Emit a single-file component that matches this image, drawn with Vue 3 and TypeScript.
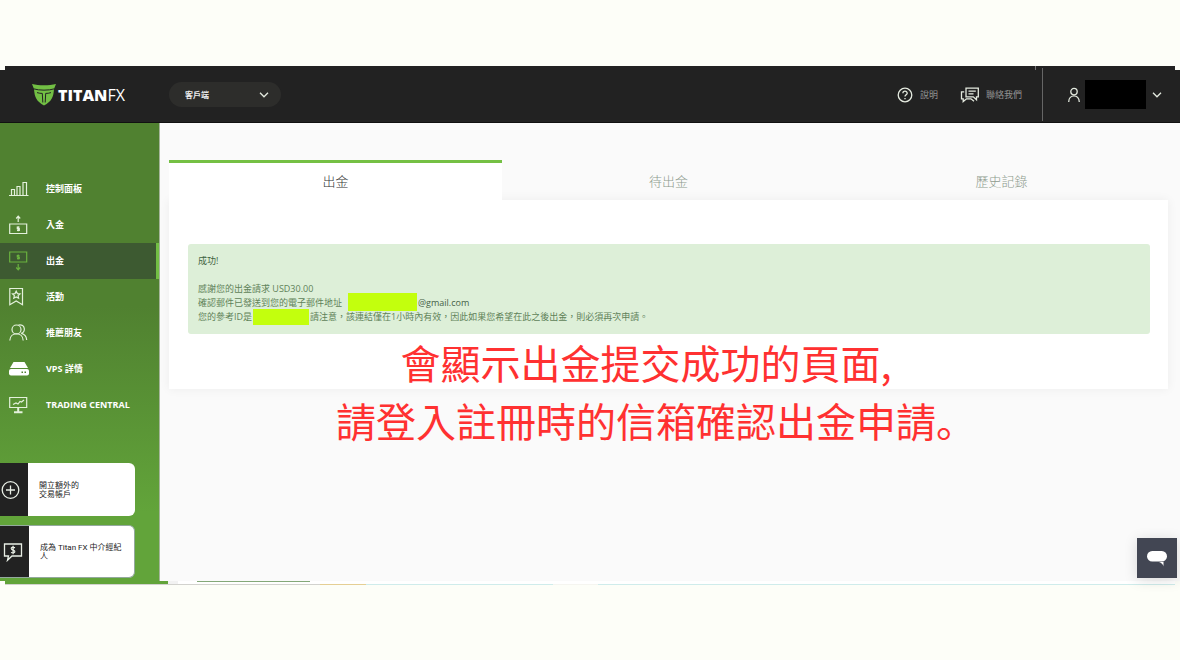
<script setup lang="ts">
import { ref } from 'vue'

interface NavItem {
  id: string
  label: string
}

const navItems: NavItem[] = [
  { id: 'dashboard', label: '控制面板' },
  { id: 'deposit', label: '入金' },
  { id: 'withdraw', label: '出金' },
  { id: 'promo', label: '活動' },
  { id: 'refer', label: '推薦朋友' },
  { id: 'vps', label: 'VPS 詳情' },
  { id: 'trading', label: 'TRADING CENTRAL' },
]
const activeNav = ref('withdraw')

const tabs = ['出金', '待出金', '歷史記錄']
const activeTab = ref(0)
const area = ref('client')
</script>

<template>
  <div class="stage" lang="zh-Hant">
    <div class="edge-top"><i></i></div>

    <header class="topbar">
      <a class="logo" href="#" aria-label="TITANFX">
        <svg width="24" height="22" viewBox="0 0 24 22">
          <path d="M0 0C7 1.800 17 1.800 24 0L22 5C21.500 13 19.500 17.500 12 21.500C4.500 17.500 2.500 13 2 5Z" fill="#72bf44" />
          <path d="M1.500 4.800C7 6.600 17 6.600 22.500 4.800M5 8.600Q8 9.500 10.300 9.400L10.800 18.500M19 8.600Q16 9.500 13.700 9.400L13.200 18.500" fill="none" stroke="#222" />
        </svg>
        <span class="brand"><b>TITAN</b><span>FX</span></span>
      </a>

      <div class="picker">
        <select v-model="area" aria-label="客戶端">
          <option value="client">客戶端</option>
        </select>
        <svg class="picker-arrow line" width="10" height="6" viewBox="0 0 10 6"><path d="M1 .8L5 4.800L9 .8" /></svg>
      </div>

      <nav class="tools">
        <a href="#">
          <svg class="line" width="16" height="16" viewBox="0 0 16 16">
            <circle cx="8" cy="8" r="6.800" />
            <path d="M5.900 6.300C5.900 3.500 10.200 3.500 10.200 6.200C10.200 7.800 8 7.800 8 9.600M8 11V12.200" />
          </svg>
          <span>說明</span>
        </a>
        <a href="#">
          <svg class="line" width="20" height="16" viewBox="0 0 20 16">
            <path d="M6 1.200H18.300V9.800H16.500V12.800L13.300 9.800H6ZM8.500 4.200H15.800M8.500 6.800H13.500" />
            <path d="M4.200 4.800H1.500V11.800H3.200V14.600L6.500 11.800H11L14 14.200" />
          </svg>
          <span>聯絡我們</span>
        </a>
      </nav>

      <button class="account" type="button" aria-label="帳戶">
        <svg class="line" width="14" height="16" viewBox="0 0 14 16">
          <circle cx="7" cy="4.600" r="3.200" />
          <path d="M1.700 15C1.700 6.800 12.300 6.800 12.300 15" />
        </svg>
        <span class="masked"></span>
        <svg class="line" width="10" height="6" viewBox="0 0 10 6"><path d="M1 .8L5 4.800L9 .8" /></svg>
      </button>
    </header>

    <div class="workspace">
      <aside class="sidebar">
        <nav>
          <a
            v-for="item in navItems"
            :key="item.id"
            href="#"
            :class="{ active: item.id === activeNav }"
            @click.prevent="activeNav = item.id"
          >
            <svg width="20" height="20" viewBox="0 0 20 20">
              <g v-if="item.id === 'dashboard'">
                <path d="M0 16.500H19.500M2.500 16V10.500H5.500V16M8 16V7.500H11V16M14 16V3.500H17.500V16" />
              </g>
              <g v-else-if="item.id === 'deposit'">
                <path d="M.7 9H17.700V18.500H.7ZM9.200 7V1.500M7.200 3.500L9.200 1.200L11.200 3.500" />
                <path d="M10.500 12.200H8.300V13.700H10.300V15.300H8M9.200 11.300V16.200" />
              </g>
              <g v-else-if="item.id === 'withdraw'">
                <path d="M.7 1H17.700V11H.7ZM9.200 13V18.500M7.200 16.500L9.200 18.800L11.200 16.500" />
                <path d="M10.500 4.500H8.300V6H10.300V7.600H8M9.200 3.600V8.500" />
              </g>
              <g v-else-if="item.id === 'promo'">
                <path d="M.8 1.500H13.500V17.800L7.200 14L.8 17.800Z" />
                <path d="M7.200 4.200L8.400 6.600L11 6.900L9.100 8.600L9.600 11.200L7.200 9.900L4.800 11.200L5.400 8.600L3.500 6.900L6 6.600Z" />
              </g>
              <g v-else-if="item.id === 'refer'">
                <circle cx="7.500" cy="6.500" r="4.500" />
                <path d="M.8 17.500C1.200 8.500 13.800 8.500 14.200 17.500M9.500 2C16.500 .5 17 9.500 12.200 10.300C15.500 11 17.500 13.500 17.700 17" />
              </g>
              <g v-else-if="item.id === 'vps'" class="solid">
                <path d="M4.500 3H15.500L19 9H1Z" />
                <path d="M2 10H18Q20 10 20 12V14.500Q20 16.500 18 16.500H2Q0 16.500 0 14.500V12Q0 10 2 10Z" />
                <path d="M12.500 12.500H14V14H12.500ZM15.500 12.500H17V14H15.500Z" fill="#508130" />
              </g>
              <g v-else>
                <path d="M.7 2.500H17.700V12.500H.7ZM4 9.500L7 8L9 9L11 6.500L12.500 7L15 5" />
                <path class="thick" d="M5 17.300H13.500M9.200 13V17" />
              </g>
            </svg>
            <span>{{ item.label }}</span>
          </a>
        </nav>

        <div class="cards">
          <button class="card" type="button">
            <span class="card-icon">
              <svg width="20" height="20" viewBox="0 0 20 20"><circle cx="10.500" cy="10" r="8.300" /><path d="M10.500 5.500V14.500M6 10H15" /></svg>
            </span>
            <span class="card-text">開立額外的<br />交易帳戶</span>
          </button>
          <button class="card ring" type="button">
            <span class="card-icon">
              <svg width="20" height="20" viewBox="0 0 20 20">
                <path d="M1.500 2H18.500V14H9L4.500 18.300L5.500 14H1.500Z" />
                <path d="M12 5.700Q8 4.500 8.300 6.700Q8.500 7.900 10.200 8.100Q12 8.500 11.800 9.900Q11.300 11.500 8 10.500M10.100 3.800V12.200" />
              </svg>
            </span>
            <span class="card-text">成為 Titan FX 中介經紀人</span>
          </button>
        </div>
      </aside>

      <main class="content">
        <div class="tabs" role="tablist">
          <button
            v-for="(tab, i) in tabs"
            :key="tab"
            type="button"
            role="tab"
            :aria-selected="i === activeTab"
            :class="{ on: i === activeTab }"
            @click="activeTab = i"
          >{{ tab }}</button>
        </div>
        <section class="panel">
          <div class="alert" role="status">
            <p class="title">成功!</p>
            <p>感謝您的出金請求 USD30.00</p>
            <p>確認郵件已發送到您的電子郵件地址<span class="mark mail"></span><span class="mail-host">@gmail.com</span></p>
            <p>您的參考ID是<span class="mark ref"></span>請注意，該連結僅在1小時內有效，因此如果您希望在此之後出金，則必須再次申請。</p>
          </div>
        </section>
      </main>
    </div>

    <div class="edge-bottom">
      <i class="green"></i><i class="pale"></i><i class="grey"></i><i class="rule"></i><i class="gap"></i><i class="gold"></i><i class="aqua"></i><i class="break"></i><i class="aqua long"></i>
    </div>

    <div class="caption">
      <p>會顯示出金提交成功的頁面,</p>
      <p>請登入註冊時的信箱確認出金申請<span class="stop">。</span></p>
    </div>

    <button class="chat" type="button" aria-label="Chat">
      <svg width="22" height="18" viewBox="0 0 22 18" fill="#fff">
        <rect x="1" y="2" width="20" height="10.500" rx="5.200" />
        <path d="M13 13H17.500V17.500Q17 14.500 13 13Z" />
      </svg>
    </button>
  </div>
</template>

<style>
body {
  margin: 0;
  background: #fdfef8;
}
</style>

<style scoped>
* {
  box-sizing: border-box;
}
.stage {
  position: relative;
  display: flex;
  flex-direction: column;
  min-height: 100vh;
  padding: 66px 0 75px;
  background: #fdfef8;
  color: #333;
  font-family: "Open Sans", "Noto Sans CJK TC", sans-serif;
  font-size: 9px;
}
a {
  color: inherit;
  text-decoration: none;
}
button {
  border: 0;
  padding: 0;
  font: inherit;
  cursor: pointer;
}
p {
  margin: 0;
}
svg {
  display: block;
  flex: none;
}
.edge-top {
  display: flex;
  justify-content: flex-end;
  height: 4px;
  margin: 0 5px;
  padding-right: 139px;
  background: #222;
}
.edge-top i {
  width: 1px;
  background: #777;
}

.topbar {
  display: flex;
  align-items: center;
  height: 53px;
  padding: 0 0 3px 32px;
  background: #222;
  border-bottom: 1px solid #111;
}
.line {
  stroke: #e4eadf;
  stroke-width: 1.3;
  fill: none;
}
.logo {
  display: flex;
  align-items: center;
  gap: 2px;
  width: 137px;
}
.brand {
  color: #fff;
  font-size: 16px;
  line-height: 16px;
}
.brand b {
  font-weight: 800;
}
.brand span {
  font-weight: 400;
}
.picker {
  position: relative;
  width: 112px;
}
.picker select {
  display: block;
  width: 100%;
  height: 25px;
  padding: 0 16px;
  border: 0;
  border-radius: 13px;
  appearance: none;
  background: #2d2d2b;
  color: #eee;
  font: bold 8px "Open Sans", "Noto Sans CJK TC", sans-serif;
}
.picker-arrow {
  position: absolute;
  top: 10px;
  right: 12px;
  pointer-events: none;
}
.tools {
  display: flex;
  gap: 22px;
  margin-left: auto;
  padding-right: 20px;
  color: #929292;
}
.tools a {
  display: flex;
  align-items: center;
  gap: 7px;
}
.tools a:last-child {
  gap: 6px;
}
.account {
  display: flex;
  align-items: center;
  height: 53px;
  gap: 4px;
  width: 138px;
  padding-left: 24px;
  border-left: 1px solid #666;
  background: none;
}
.masked {
  width: 61px;
  height: 29px;
  margin-right: 2px;
  background: #000;
}

.workspace {
  display: grid;
  flex: 1;
  grid-template-columns: 160px 1fr;
}
.sidebar {
  display: flex;
  flex-direction: column;
  justify-content: space-between;
  padding: 48px 0 3px;
  border-right: 1px solid #a6b59b;
  background: linear-gradient(#508130 0, #508130 40%, #62a43a 85%);
  color: #fff;
  font-weight: bold;
}
.sidebar nav a {
  display: flex;
  align-items: center;
  gap: 17px;
  height: 36px;
  padding: 0 0 1px 9px;
}
.sidebar nav svg {
  fill: none;
  stroke: #e4f1dc;
  stroke-width: 1.2;
}
.sidebar nav .thick {
  stroke-width: 2;
}
.sidebar nav .solid {
  fill: #fff;
  stroke: none;
}
.sidebar nav .active {
  border-right: 3px solid #72be44;
  background: #3d5a31;
}
.sidebar nav .active svg {
  stroke: #6ab23f;
}
.cards {
  display: flex;
  flex-direction: column;
  gap: 9px;
}
.card {
  display: flex;
  width: 135px;
  height: 53px;
  border-radius: 0 6px 6px 0;
  overflow: hidden;
  background: #fff;
  color: #222;
  font-family: Roboto, "Noto Sans CJK TC", sans-serif;
  font-size: 8px;
  font-weight: 400;
  line-height: 9px;
  text-align: left;
}
.card-icon {
  display: flex;
  flex: none;
  align-items: center;
  width: 28px;
  background: #222;
}
.card svg {
  fill: none;
  stroke: #e8eee5;
  stroke-width: 1.3;
}
.card-text {
  align-self: center;
  padding: 0 10px 0 11px;
}
.ring {
  border: 1px solid #93a99d;
  border-left: 0;
}
.ring .card-icon {
  width: 29px;
  padding-left: 3px;
}

.content {
  padding: 37px 12px 0 9px;
  background: #fafafa;
}
.tabs {
  display: grid;
  grid-template-columns: repeat(3, 1fr);
}
.tabs button {
  height: 40px;
  padding-bottom: 2px;
  border-top: 3px solid transparent;
  background: none;
  color: #8d9a8d;
  font-size: 13px;
  font-weight: 300;
}
.tabs .on {
  position: relative;
  border-color: #75c044;
  background: #fff;
  color: #333;
}
.panel {
  padding: 44px 18px 55px 19px;
  background: #fff;
  box-shadow: 0 0 10px rgba(0, 0, 0, 0.06);
}
.alert {
  padding: 10px;
  border-radius: 3px;
  background: #ddefd8;
  color: #5f8258;
  line-height: 14px;
}
.alert p {
  display: flex;
  align-items: center;
  height: 14px;
  white-space: pre;
}
.alert .title {
  margin-bottom: 14px;
  color: #3f6340;
}
.mark {
  flex: none;
  background: #c3ff0d;
}
.mail {
  width: 69px;
  height: 18px;
  margin: 0 1px 3px 6px;
}
.mail-host {
  color: #456246;
}
.ref {
  width: 56px;
  height: 16px;
  margin: 0 1px;
}

.edge-bottom {
  display: flex;
  height: 4px;
  margin: 0 5px;
  background: #fff;
}
.edge-bottom i {
  border-bottom: 1px solid #d2d2ce;
}
.edge-bottom .green {
  width: 163px;
  background: #62a43a;
}
.edge-bottom .pale {
  width: 10px;
  background: #f2f2f2;
}
.edge-bottom .grey {
  width: 19px;
}
.edge-bottom .rule {
  width: 113px;
  border-top: 1px solid #83a878;
}
.edge-bottom .gap {
  width: 10px;
}
.edge-bottom .gold {
  width: 46px;
  border-color: #e5cf94;
}
.edge-bottom .aqua {
  width: 187px;
  border-color: #cfeceb;
}
.edge-bottom .break {
  width: 45px;
  border-color: #f5f5f0;
}
.edge-bottom .long {
  flex: 1;
}

.caption {
  position: absolute;
  top: 333px;
  right: 0;
  left: 0;
  padding-left: 112px;
  color: #ff3131;
  font-family: "Noto Sans CJK TC", sans-serif;
  font-size: 40px;
  line-height: 58px;
  text-align: center;
  pointer-events: none;
}
.stop {
  display: inline-block;
  width: 20px;
  font-family: "Noto Sans CJK SC", sans-serif;
}
.chat {
  position: absolute;
  right: 3px;
  bottom: 82px;
  display: grid;
  place-items: center;
  width: 40px;
  height: 40px;
  background: #424653;
  box-shadow: 0 2px 14px rgba(0, 0, 0, 0.14);
}
</style>
